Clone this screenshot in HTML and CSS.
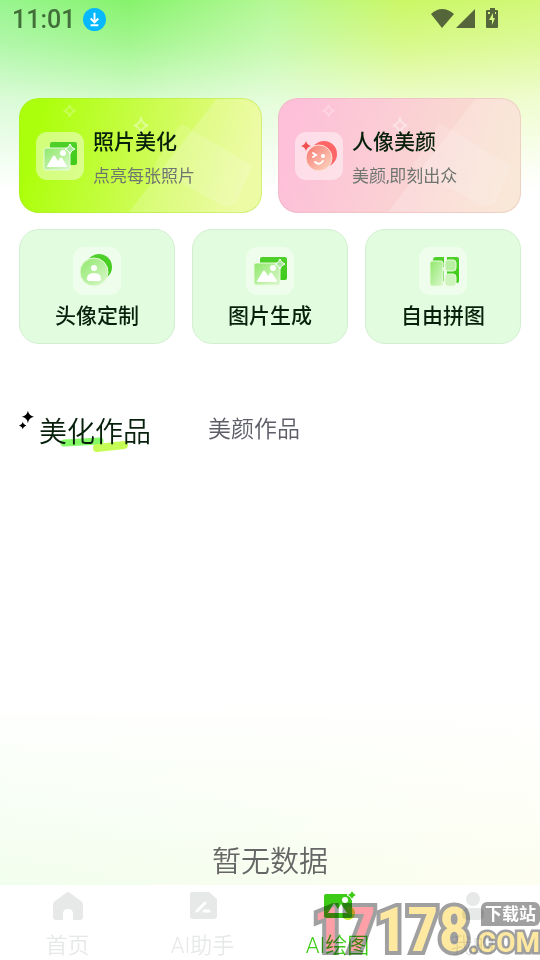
FILE: index.html
```html
<!DOCTYPE html>
<html lang="zh-CN">

<head>
    <meta charset="utf-8">
    <meta name="viewport" content="width=device-width, initial-scale=1">
    <title>AI绘图</title>
    <link rel="stylesheet" href="styles.css">
</head>

<body>
    <svg class="defs" aria-hidden="true">
        <defs>
            <linearGradient id="leaf" x1="0" y1="0" x2="1" y2="1">
                <stop offset="0" stop-color="#8fe86a"/>
                <stop offset="1" stop-color="#dcf8cf"/>
            </linearGradient>
            <linearGradient id="deep" x1="0" y1="0" x2="0" y2="1">
                <stop offset="0" stop-color="#4fd02a"/>
                <stop offset="1" stop-color="#3ecb17"/>
            </linearGradient>
            <linearGradient id="rose" x1="0" y1="0" x2="1" y2="1">
                <stop offset="0" stop-color="#f7746f"/>
                <stop offset="1" stop-color="#fbdcc4"/>
            </linearGradient>
            <symbol id="star" viewBox="0 0 12 12">
                <path d="M6 0Q7 5 12 6Q7 7 6 12Q5 7 0 6Q5 5 6 0Z"/>
            </symbol>
            <symbol id="picture" viewBox="0 0 48 48">
                <rect x="14" y="10" width="27" height="23" rx="2" fill="url(#deep)"/>
                <rect x="8" y="16" width="26" height="22" rx="2" fill="url(#leaf)" stroke="#e8fbdc"/>
                <path d="M11 34L17 24Q18 23 19 24L22 29L24 26Q25 25 26 26L31 34Q31 35 29 35H12Q10 35 11 34Z" fill="#fff"/>
                <circle cx="27" cy="21" r="3" fill="#fff"/>
                <path d="M34 12Q35 16 39 17Q35 18 34 22Q33 18 29 17Q33 16 34 12Z" fill="#a7e79b" stroke="#fff"/>
            </symbol>
            <symbol id="shine" viewBox="0 0 243 115" preserveAspectRatio="none">
                <path d="M198 0H243V115H110Z" fill="#fff" opacity=".18"/>
                <path d="M166 27Q163 24 160 28L137 64Q134 69 138 72L203 108Q216 112 221 99L234 68Z" fill="#fff" opacity=".14"/>
                <path d="M50 6Q51 11 56 12Q51 13 50 18Q49 13 44 12Q49 11 50 6Z" fill="none" stroke="#fff" stroke-width="2" opacity=".25"/>
                <path d="M122 20Q124 26 129 27Q124 28 122 34Q120 28 115 27Q120 26 122 20Z" fill="none" stroke="#fff" stroke-width="2" opacity=".4"/>
            </symbol>
        </defs>
    </svg>

    <header class="status">
        <time class="clock">11:01</time>
        <svg class="download" viewBox="0 0 24 24">
            <circle cx="12" cy="12" r="12" fill="#05b8ff"/>
            <path d="M12 5V14M8 11L12 15L16 11M8 18H16" fill="none" stroke="#fff" stroke-width="2"/>
        </svg>
        <svg class="signals" viewBox="0 0 68 22" fill="#55663a">
            <path d="M0 6Q11-4 23 6L11 20Z"/>
            <path d="M44 1V20H25Z"/>
            <path fill-rule="evenodd" d="M59 0H64V2H66Q67 2 67 3V19Q67 20 66 20H56Q55 20 55 19V3Q55 2 56 2H59ZM62 5L58 12H61V17L64 10H62ZM57 4V6H59V4ZM64 4V6H65V4Z"/>
        </svg>
    </header>

    <main>
        <section class="features">
            <button class="card wide lime">
                <svg class="shine"><use href="#shine"/></svg>
                <svg class="tile" viewBox="0 0 48 48"><use href="#picture"/></svg>
                <span class="words">
                    <span class="name">照片美化</span>
                    <span class="hint">点亮每张照片</span>
                </span>
            </button>
            <button class="card wide pink">
                <svg class="shine"><use href="#shine"/></svg>
                <svg class="tile" viewBox="0 0 48 48">
                    <circle cx="29" cy="22" r="13" fill="#ff6466"/>
                    <circle cx="24" cy="26" r="13" fill="url(#rose)" stroke="#fde3dc"/>
                    <path d="M11 9Q12 13 16 14Q12 15 11 19Q10 15 6 14Q10 13 11 9Z" fill="#f0504e"/>
                    <path d="M18 21L21 23L18 25M20 30Q24 34 28 29" fill="none" stroke="#fff" stroke-width="2" stroke-linecap="round"/>
                    <circle cx="28" cy="24" r="2" fill="#fff"/>
                </svg>
                <span class="words">
                    <span class="name">人像美颜</span>
                    <span class="hint">美颜,即刻出众</span>
                </span>
            </button>
        </section>

        <section class="features small">
            <button class="card">
                <svg class="tile" viewBox="0 0 48 48">
                    <circle cx="26" cy="20" r="13" fill="url(#deep)"/>
                    <circle cx="21" cy="25" r="14" fill="url(#leaf)" stroke="#e8fbdc"/>
                    <circle cx="21" cy="21" r="3" fill="#fff"/>
                    <path d="M14 32Q14 26 21 26Q28 26 28 32Q28 34 25 34H17Q14 34 14 32Z" fill="#fff"/>
                </svg>
                <span class="name">头像定制</span>
            </button>
            <button class="card">
                <svg class="tile" viewBox="0 0 48 48"><use href="#picture"/></svg>
                <span class="name">图片生成</span>
            </button>
            <button class="card">
                <svg class="tile" viewBox="0 0 48 48">
                    <path d="M17 10H25V34H14V13Q14 10 17 10Z" fill="url(#deep)"/>
                    <path d="M28 10H38Q40 10 40 12V34Q40 36 38 36H28Z" fill="url(#deep)"/>
                    <rect x="11" y="14" width="13" height="25" rx="2" fill="url(#leaf)" stroke="#e8fbdc"/>
                    <rect x="26" y="13" width="11" height="11" rx="3" fill="#b9efa2" stroke="#e8fbdc"/>
                    <rect x="26" y="27" width="11" height="12" rx="3" fill="#cdf4bd" stroke="#e8fbdc"/>
                    <circle cx="25" cy="22" r="2" fill="#e8fbdc"/>
                </svg>
                <span class="name">自由拼图</span>
            </button>
        </section>

        <div class="tabs" role="tablist">
            <button class="tab active" role="tab" aria-selected="true">
                <svg class="sparks" viewBox="0 0 16 22">
                    <use href="#star" x="3" y="0" width="13" height="13"/>
                    <use href="#star" x="0" y="12" width="8" height="8"/>
                </svg>
                <span class="tab-name">
                    <svg class="stroke" viewBox="0 0 70 16" fill="none" stroke-linecap="round">
                        <path d="M5 6L41 4" stroke="#85f967" stroke-width="7"/>
                        <path d="M38 11L65 8" stroke="#c5fc55" stroke-width="8"/>
                    </svg>
                    <span class="tab-text">美化作品</span>
                </span>
            </button>
            <button class="tab" role="tab" aria-selected="false">美颜作品</button>
        </div>

        <p class="empty">暂无数据</p>
    </main>

    <nav class="bar">
        <a href="#home">
            <svg viewBox="0 0 32 32" fill="currentColor">
                <path d="M14 3Q16 1 18 3L29 11Q31 12 31 15V27Q31 30 28 30H21V24Q21 19 16 19Q11 19 11 24V30H4Q1 30 1 27V15Q1 12 3 11Z"/>
            </svg>
            首页
        </a>
        <a href="#assistant">
            <svg viewBox="0 0 32 32">
                <path d="M5 2H22L30 9V26Q30 29 27 29H6Q3 29 3 26V4Q3 2 5 2Z" fill="currentColor"/>
                <path d="M10 21L18 13M17 21H22" stroke="#fff" stroke-width="3" stroke-linecap="round"/>
            </svg>
            AI助手
        </a>
        <a href="#draw" class="current">
            <svg viewBox="0 0 32 32">
                <circle cx="26" cy="23" r="7" fill="#c5ee38"/>
                <rect x="2" y="4" width="28" height="24" rx="2" fill="#3ecb17"/>
                <path d="M6 23L12 13L16 19L19 14L25 23Z" fill="#fff"/>
                <circle cx="23" cy="10" r="3" fill="#fff"/>
                <path d="M30 0Q31 4 35 5Q31 6 30 10Q29 6 25 5Q29 4 30 0Z" fill="#3ecb17" stroke="#fff"/>
            </svg>
            AI绘图
        </a>
        <a href="#mine">
            <svg viewBox="0 0 32 32" fill="currentColor">
                <circle cx="16" cy="9" r="7"/>
                <rect x="5" y="18" width="22" height="12" rx="5"/>
            </svg>
            我的
        </a>
        <div class="watermark">
            <span class="digits"><span class="red">17</span>178</span>
            <span class="site">
                <span class="badge">下载站</span>
                <span class="com">.COM</span>
            </span>
        </div>
    </nav>
</body>

</html>
```
FILE: styles.css
```css
* {
    box-sizing: border-box;
}

body {
    margin: 0;
    min-height: 100vh;
    display: flex;
    flex-direction: column;
    font-family: Roboto, "Noto Sans CJK SC", sans-serif;
    background:
        linear-gradient(to bottom, rgba(255, 255, 255, 0), rgba(255, 255, 255, .25) 45px, rgba(255, 255, 255, .65) 100px, #fff 190px) top / 100% 220px no-repeat,
        linear-gradient(to right, #98f58f, #86f36c 24%, #b4f896 50%, #cbf765 75%, #d2f878) top / 100% 220px no-repeat,
        linear-gradient(to top, rgba(255, 255, 255, 0), #fff) bottom / 100% 260px no-repeat,
        linear-gradient(to right, #ecfee6, #fcfeea) bottom / 100% 260px no-repeat,
        #fff;
}

button {
    padding: 0;
    border: none;
    background: none;
    font: inherit;
    cursor: pointer;
}

.defs {
    position: absolute;
    width: 0;
    height: 0;
}

.status {
    display: flex;
    align-items: center;
    height: 38px;
    padding: 0 41px 0 12px;
}

.clock {
    font-size: 25px;
    font-weight: 500;
    color: #416e39;
}

.download {
    width: 23px;
    height: 23px;
    margin-left: 8px;
}

.signals {
    width: 68px;
    height: 22px;
    margin-left: auto;
}

main {
    flex: 1;
    display: flex;
    flex-direction: column;
    padding: 60px 19px 0 19px;
}

.features {
    display: flex;
    gap: 16px;
}

.features.small {
    margin-top: 16px;
    gap: 17px;
}

.card {
    flex: 1;
    display: flex;
    flex-direction: column;
    align-items: center;
    height: 115px;
    padding-top: 17px;
    border: 1px solid #d2f0cf;
    border-radius: 20px;
    background: #e2fcdf;
}

.card.wide {
    position: relative;
    overflow: hidden;
    flex-direction: row;
    gap: 9px;
    padding: 0 16px;
    text-align: left;
}

.lime {
    border-color: rgba(160, 220, 60, .3);
    background: linear-gradient(105deg, #acff0c 10%, #e9fa90 90%) border-box;
}

.pink {
    border-color: rgba(220, 170, 170, .3);
    background: linear-gradient(105deg, #fdc0d8 10%, #f8e3cf 95%) border-box;
}

.shine {
    position: absolute;
    inset: 0;
    width: 100%;
    height: 100%;
}

.tile {
    position: relative;
    flex: none;
    width: 48px;
    height: 48px;
    border-radius: 11px;
    background: rgba(255, 255, 255, .45);
}

.words {
    position: relative;
    display: flex;
    flex-direction: column;
    padding-top: 6px;
}

.name {
    font-size: 21px;
    line-height: 34px;
    font-weight: 500;
    color: #07200c;
}

.small .name {
    margin-top: 4px;
}

.hint {
    font-size: 17px;
    line-height: 34px;
    color: #6f7670;
}

.tabs {
    display: flex;
    align-items: center;
    gap: 57px;
    margin-top: 61px;
}

.tab {
    font-size: 23px;
    line-height: 48px;
    font-weight: 350;
    color: #5d5e68;
}

.tab.active {
    display: flex;
    align-items: flex-start;
    gap: 5px;
    padding-top: 7px;
    font-size: 28px;
    color: #07200c;
}

.sparks {
    width: 15px;
    height: 22px;
    margin-top: -2px;
    fill: #000;
}

.tab-name {
    position: relative;
    line-height: 42px;
}

.stroke {
    position: absolute;
    left: 20px;
    bottom: 1px;
    width: 70px;
    height: 16px;
}

.tab-text {
    position: relative;
}

.empty {
    margin: auto 0 0;
    text-align: center;
    font-size: 29px;
    line-height: 46px;
    font-weight: 350;
    color: #666;
}

.bar {
    position: relative;
    display: flex;
    height: 75px;
    background: #fff;
}

.bar a {
    flex: 1;
    display: flex;
    flex-direction: column;
    align-items: center;
    gap: 7px;
    padding-top: 5px;
    font-size: 22px;
    line-height: 34px;
    font-weight: 350;
    color: #e6e9e8;
    text-decoration: none;
}

.bar a svg {
    width: 32px;
    height: 32px;
    overflow: visible;
}

.bar a.current {
    color: #3ecb17;
}

.watermark {
    position: absolute;
    right: 0;
    bottom: 0;
    display: flex;
    align-items: flex-end;
    mix-blend-mode: multiply;
    font-weight: 700;
    color: #ffe9a0;
    paint-order: stroke fill;
    pointer-events: none;
}

.digits {
    font-family: "Liberation Sans Narrow", "Roboto Condensed", "Liberation Sans", sans-serif;
    font-size: 62px;
    line-height: 60px;
    -webkit-text-stroke: 8px #a0a0a0;
}

.red {
    color: #ffa0a8;
}

.site {
    display: flex;
    flex-direction: column;
    align-items: flex-end;
}

.badge {
    padding: 0 4px;
    border-radius: 6px 6px 6px 0;
    background: #a0a0a0;
    font-size: 17px;
    line-height: 24px;
    color: #fff;
}

.com {
    font-size: 28px;
    line-height: 34px;
    -webkit-text-stroke: 5px #a0a0a0;
}
```
